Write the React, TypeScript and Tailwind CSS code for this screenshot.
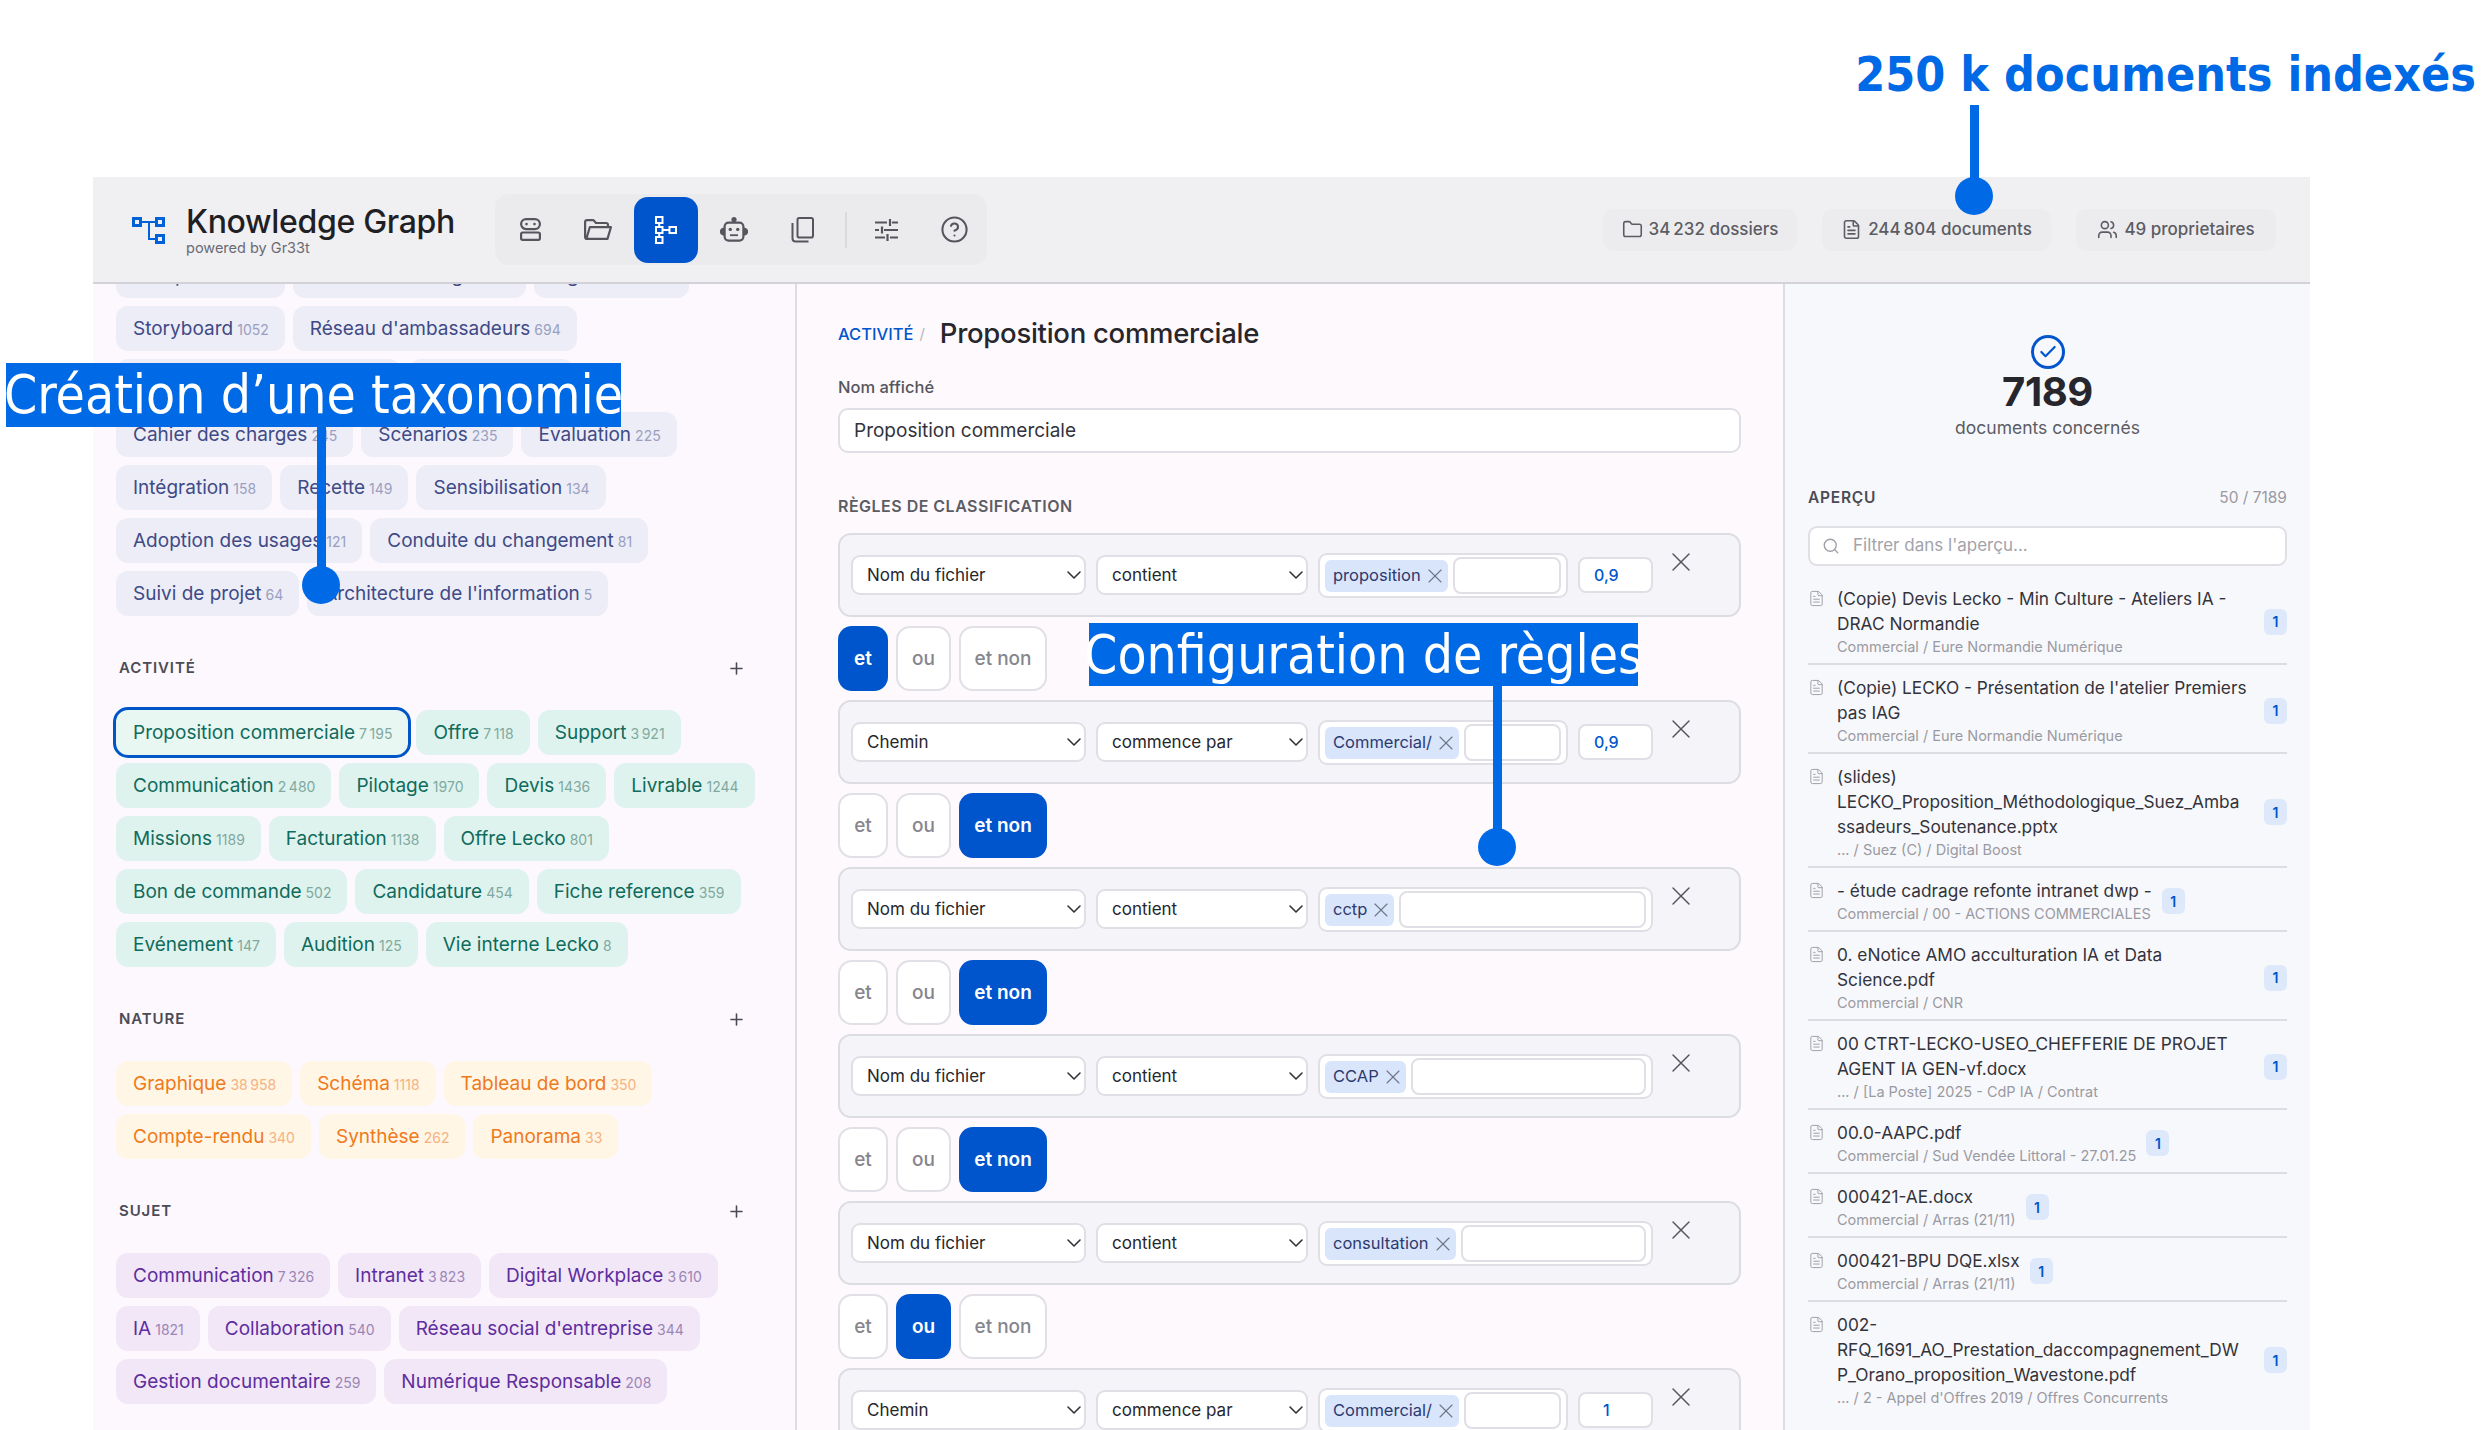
import React from "react";
import { Check, ChevronDown, CircleHelp, FileText, Folder, Plus, Search, Users, X } from "lucide-react";

type Tone = "blue" | "teal" | "orange" | "purple";
type ChipData = [string, string];

const toneClass: Record<Tone, string> = {
  blue: "bg-[#ecedf7] text-[#3f4a86]",
  teal: "bg-[#dff3ee] text-[#0f6b5c]",
  orange: "bg-[#fff6e6] text-[#ef7a1c]",
  purple: "bg-[#f1e7f7] text-[#5f2d9e]",
};

const countClass: Record<Tone, string> = {
  blue: "text-[#9a9fc0]",
  teal: "text-[#7fa9a0]",
  orange: "text-[#f6b27f]",
  purple: "text-[#9c85b5]",
};

function Chip({ label, count, tone, active }: { label: string; count: string; tone: Tone; active?: boolean }) {
  return (
    <div
      className={`h-[45px] shrink-0 rounded-[12px] pl-[17px] pr-[16px] pt-[2px] flex items-center gap-[4px] whitespace-nowrap text-[19px] ${toneClass[tone]} ${
        active ? "outline-[3px] outline-[#0055c8] bg-[#e9f7f3]" : ""
      }`}
    >
      <span>{label}</span>
      <span className={`text-[14px] ${countClass[tone]}`}>{count}</span>
    </div>
  );
}

function ChipRows({ rows, tone }: { rows: ChipData[][]; tone: Tone }) {
  return (
    <div className="flex flex-col gap-[8px]">
      {rows.map((row, i) => (
        <div key={i} className="flex gap-[8px]">
          {row.map(([label, count]) => (
            <Chip key={label} label={label} count={count} tone={tone} active={label === "Proposition commerciale"} />
          ))}
        </div>
      ))}
    </div>
  );
}

function SectionTitle({ title }: { title: string }) {
  return (
    <div className="h-[24px] mt-[40px] mb-[30px] pl-[3px] pr-[49px] flex items-center justify-between">
      <span className="text-[15px] font-semibold tracking-[0.06em] text-[#4b4b55]">{title}</span>
      <Plus size={19} strokeWidth={2} className="text-[#4b4b55]" />
    </div>
  );
}

const taxoRows: ChipData[][] = [
  [["Comparatif", "1892"], ["Atelier de cadrage", "1226"], ["Ingénierie", "1102"]],
  [["Storyboard", "1052"], ["Réseau d'ambassadeurs", "694"]],
  [["Conception fonctionnelle", "312"], ["Benchmark", "288"]],
  [["Cahier des charges", "245"], ["Scénarios", "235"], ["Evaluation", "225"]],
  [["Intégration", "158"], ["Recette", "149"], ["Sensibilisation", "134"]],
  [["Adoption des usages", "121"], ["Conduite du changement", "81"]],
  [["Suivi de projet", "64"], ["Architecture de l'information", "5"]],
];

const activiteRows: ChipData[][] = [
  [["Proposition commerciale", "7\u202f195"], ["Offre", "7\u202f118"], ["Support", "3\u202f921"]],
  [["Communication", "2\u202f480"], ["Pilotage", "1970"], ["Devis", "1436"], ["Livrable", "1244"]],
  [["Missions", "1189"], ["Facturation", "1138"], ["Offre Lecko", "801"]],
  [["Bon de commande", "502"], ["Candidature", "454"], ["Fiche reference", "359"]],
  [["Evénement", "147"], ["Audition", "125"], ["Vie interne Lecko", "8"]],
];

const natureRows: ChipData[][] = [
  [["Graphique", "38\u202f958"], ["Schéma", "1118"], ["Tableau de bord", "350"]],
  [["Compte-rendu", "340"], ["Synthèse", "262"], ["Panorama", "33"]],
];

const sujetRows: ChipData[][] = [
  [["Communication", "7\u202f326"], ["Intranet", "3\u202f823"], ["Digital Workplace", "3\u202f610"]],
  [["IA", "1821"], ["Collaboration", "540"], ["Réseau social d'entreprise", "344"]],
  [["Gestion documentaire", "259"], ["Numérique Responsable", "208"]],
];

function SelectBox({ value, width }: { value: string; width: string }) {
  return (
    <div className={`${width} h-[40px] shrink-0 rounded-[9px] border-2 border-[#dfdfe5] bg-white pl-[14px] flex items-center justify-between text-[17px] text-[#26262c]`}>
      <span className="pt-[2px]">{value}</span>
      <ChevronDown size={24} strokeWidth={1.6} className="-mr-[2px] text-[#33333a]" />
    </div>
  );
}

type Rule = { field: string; op: string; tag: string; score?: string; logic?: "et" | "ou" | "et non" };

const rules: Rule[] = [
  { field: "Nom du fichier", op: "contient", tag: "proposition", score: "0,9", logic: "et" },
  { field: "Chemin", op: "commence par", tag: "Commercial/", score: "0,9", logic: "et non" },
  { field: "Nom du fichier", op: "contient", tag: "cctp", logic: "et non" },
  { field: "Nom du fichier", op: "contient", tag: "CCAP", logic: "et non" },
  { field: "Nom du fichier", op: "contient", tag: "consultation", logic: "ou" },
  { field: "Chemin", op: "commence par", tag: "Commercial/", score: "1" },
];

function RuleCard({ rule }: { rule: Rule }) {
  return (
    <div className="h-[84px] shrink-0 rounded-[13px] border-2 border-[#dcdce3] bg-[#f5f5f9] pl-[11px] pr-[18px] pt-[18px] flex items-start gap-[10px]">
      <div className="pt-[2px] flex gap-[10px]">
        <SelectBox value={rule.field} width="w-[235px]" />
        <SelectBox value={rule.op} width="w-[212px]" />
      </div>
      <div className={`${rule.score ? "w-[250px]" : "w-[335px]"} h-[45px] shrink-0 rounded-[9px] border-2 border-[#dfdfe5] bg-white pl-[5px] pr-[5px] flex items-center gap-[5px]`}>
        <div className="h-[32px] shrink-0 rounded-[6px] bg-[#d9e5fb] pl-[8px] pr-[3px] flex items-center gap-[4px] text-[16.5px] text-[#2d3a6e]">
          <span>{rule.tag}</span>
          <X size={24} strokeWidth={1.1} className="-mx-[2px] text-[#6d7488]" />
        </div>
        <input readOnly className="h-[37px] min-w-0 flex-1 rounded-[8px] border-2 border-[#dfdfe5] bg-white" />
      </div>
      {rule.score && (
        <div className="w-[75px] h-[36px] mt-[4px] shrink-0 rounded-[8px] border-2 border-[#dfdfe5] bg-white pl-[14px] flex items-center text-[16px] font-medium text-[#0055cc]">
          {rule.score === "1" ? <span className="pl-[9px]">1</span> : rule.score}
        </div>
      )}
      <X size={32} strokeWidth={1.1} className="ml-[2px] -mt-[7px] shrink-0 text-[#55555e]" />
    </div>
  );
}

function LogicButtons({ selected }: { selected: string }) {
  const opts = [
    { label: "et", w: "w-[50px]" },
    { label: "ou", w: "w-[55px]" },
    { label: "et non", w: "w-[88px]" },
  ];
  return (
    <div className="flex gap-[8px] my-[9px] h-[65px] shrink-0">
      {opts.map((o) => (
        <div
          key={o.label}
          className={`${o.w} rounded-[14px] pt-[2px] flex items-center justify-center text-[19px] ${
            o.label === selected ? "bg-[#0055cc] text-white font-semibold" : "bg-white border-2 border-[#e0e0e6] text-[#85858e] font-medium"
          }`}
        >
          {o.label}
        </div>
      ))}
    </div>
  );
}

type Doc = { lines: string[]; path: string };

const docs: Doc[] = [
  { lines: ["(Copie) Devis Lecko - Min Culture - Ateliers IA -", "DRAC Normandie"], path: "Commercial / Eure Normandie Numérique" },
  { lines: ["(Copie) LECKO - Présentation de l'atelier Premiers", "pas IAG"], path: "Commercial / Eure Normandie Numérique" },
  { lines: ["(slides)", "LECKO_Proposition_Méthodologique_Suez_Amba", "ssadeurs_Soutenance.pptx"], path: "... / Suez (C) / Digital Boost" },
  { lines: ["- étude cadrage refonte intranet dwp -"], path: "Commercial / 00 - ACTIONS COMMERCIALES" },
  { lines: ["0. eNotice AMO acculturation IA et Data", "Science.pdf"], path: "Commercial / CNR" },
  { lines: ["00 CTRT-LECKO-USEO_CHEFFERIE DE PROJET", "AGENT IA GEN-vf.docx"], path: "... / [La Poste] 2025 - CdP IA / Contrat" },
  { lines: ["00.0-AAPC.pdf"], path: "Commercial / Sud Vendée Littoral - 27.01.25" },
  { lines: ["000421-AE.docx"], path: "Commercial / Arras (21/11)" },
  { lines: ["000421-BPU DQE.xlsx"], path: "Commercial / Arras (21/11)" },
  { lines: ["002-", "RFQ_1691_AO_Prestation_daccompagnement_DW", "P_Orano_proposition_Wavestone.pdf"], path: "... / 2 - Appel d'Offres 2019 / Offres Concurrents" },
];

function DocRow({ doc }: { doc: Doc }) {
  return (
    <div className="pt-[10px] pb-[6px] border-b-2 border-[#dcdde3] last:border-b-0 flex items-center gap-[10px]">
      <div className={`${doc.lines.length > 1 ? "flex-1" : ""} min-w-0 flex gap-[12px] whitespace-nowrap`}>
        <FileText size={17} strokeWidth={1.4} className="mt-[4px] shrink-0 text-[#a0a0a8]" />
        <div>
          {doc.lines.map((l) => (
            <div key={l} className="h-[25px] leading-[25px] text-[17.3px] text-[#33333b]">
              {l}
            </div>
          ))}
          <div className="h-[21px] leading-[21px] text-[14.5px] text-[#9a9aa2]">{doc.path}</div>
        </div>
      </div>
      <div className="w-[23px] h-[26px] shrink-0 rounded-[6px] bg-[#dde8fb] flex items-center justify-center text-[14px] font-semibold text-[#0055cc]">1</div>
    </div>
  );
}

function Stat({ icon, text, width }: { icon: React.ReactNode; text: string; width: string }) {
  return (
    <div className={`${width} h-[42px] rounded-[10px] bg-[#ececef] flex items-center justify-center gap-[6px] text-[17px] font-medium text-[#5c5c64]`}>
      {icon}
      <span>{text}</span>
    </div>
  );
}

function ToolBtn({ children, active }: { children: React.ReactNode; active?: boolean }) {
  return (
    <div className={`w-[64px] h-[66px] rounded-[14px] flex items-center justify-center ${active ? "bg-[#0055cc] text-white" : "text-[#55555e]"}`}>
      {children}
    </div>
  );
}

function Annotation({ className, children }: { className: string; children?: React.ReactNode }) {
  return <div className={`absolute bg-[#0069e6] ${className}`}>{children}</div>;
}

export default function App() {
  return (
    <div className="relative w-[2484px] h-[1430px] overflow-hidden bg-white pt-[177px] pl-[93px] font-['Inter',sans-serif]">
      <div className="w-[2217px] h-[1253px] flex flex-col">
        {/* header */}
        <header className="h-[107px] shrink-0 bg-[#f0f0f3] border-b-2 border-[#d2d2d8] pl-[39px] pr-[34px] flex items-center">
          <svg width="33" height="28" viewBox="0 0 33 28" fill="none" stroke="#0062d6" strokeWidth="3" className="mt-[2px] shrink-0">
            <rect x="1.5" y="1.5" width="7" height="7" />
            <rect x="24.5" y="1.5" width="7" height="7" />
            <rect x="24.5" y="18.5" width="7" height="7" />
            <path d="M8.5 5H24.5M17 5V22H24.5" strokeWidth="2" />
          </svg>
          <div className="ml-[21px] w-[309px]">
            <div className="text-[32px] leading-[36px] font-medium text-[#1f1f24] tracking-[-0.01em] whitespace-nowrap">Knowledge Graph</div>
            <div className="text-[14.5px] leading-[16px] text-[#6a6a72] whitespace-nowrap">powered by Gr33t</div>
          </div>
          <div className="h-[71px] w-[492px] rounded-[14px] bg-[#ebebee] pl-[3px] flex items-center gap-[4px]">
            <ToolBtn>
              <svg width="21" height="23" viewBox="0 0 21 23" fill="none" stroke="currentColor" strokeWidth="2.2">
                <rect x="1.1" y="1.1" width="18.8" height="10" rx="5" />
                <circle cx="6.5" cy="6.1" r="1.3" fill="currentColor" stroke="none" />
                <circle cx="14.5" cy="6.1" r="1.3" fill="currentColor" stroke="none" />
                <rect x="1.1" y="14.5" width="18.8" height="7.4" rx="1.6" />
              </svg>
            </ToolBtn>
            <ToolBtn>
              <svg width="28" height="21" viewBox="0 0 28 21" fill="none" stroke="currentColor" strokeWidth="2.2" strokeLinejoin="round">
                <path d="M5 19.9H3.2C2 19.9 1.1 19 1.1 17.8V3.2C1.1 2 2 1.1 3.2 1.1H9.5L12 4H22C23.1 4 24 4.9 24 6V8" />
                <path d="M5.8 8.2H26.9L23.5 19.9H2.3L5.8 8.2Z" />
              </svg>
            </ToolBtn>
            <ToolBtn active>
              <svg width="22" height="28" viewBox="0 0 22 28" fill="none" stroke="currentColor" strokeWidth="2">
                <rect x="1" y="1" width="6.5" height="6" />
                <rect x="1" y="11" width="6.5" height="6" />
                <rect x="1" y="21" width="6.5" height="6" />
                <rect x="14.5" y="11" width="6.5" height="6" />
                <path d="M4.2 7V11M4.2 17V21M7.5 14H14.5" />
              </svg>
            </ToolBtn>
            <ToolBtn>
              <svg width="28" height="25" viewBox="0 0 28 25" fill="none" stroke="currentColor" strokeWidth="2.2">
                <circle cx="14" cy="2.6" r="2.6" fill="currentColor" stroke="none" />
                <rect x="4.6" y="5.6" width="18.8" height="18" rx="4" />
                <path d="M4 11.5C1.8 12 .9 13.2.9 14.6S1.8 17.2 4 17.7M24 11.5C26.2 12 27.1 13.2 27.1 14.6S26.2 17.2 24 17.7" fill="currentColor" />
                <circle cx="10.3" cy="12.4" r="1.7" fill="currentColor" stroke="none" />
                <circle cx="17.7" cy="12.4" r="1.7" fill="currentColor" stroke="none" />
                <path d="M10 18.2H18" strokeWidth="1.8" />
              </svg>
            </ToolBtn>
            <ToolBtn>
              <svg width="23" height="26" viewBox="0 0 23 26" fill="none" stroke="currentColor" strokeWidth="2">
                <rect x="6.5" y="1" width="15.5" height="19.5" rx="1.8" />
                <path d="M1.5 6V21.5C1.5 23.4 2.6 24.5 4.5 24.5H17.5" />
              </svg>
            </ToolBtn>
            <div className="ml-[7px] mr-[3px] w-[2px] h-[36px] bg-[#d9d9de]" />
            <ToolBtn>
              <svg width="23" height="22" viewBox="0 0 23 22" fill="none" stroke="currentColor" strokeWidth="2.2">
                <path d="M0 3.5H12M17 3.5H23M15 0V7" />
                <path d="M0 11H4M9 11H23M7 7.5V14.5" />
                <path d="M0 18.5H10M15 18.5H23M12.5 15V22" />
              </svg>
            </ToolBtn>
            <ToolBtn>
              <CircleHelp size={29} strokeWidth={1.7} />
            </ToolBtn>
          </div>
          <div className="ml-auto flex gap-[25px]">
            <Stat width="w-[194px]" icon={<Folder size={21} strokeWidth={1.8} />} text={"34\u202f232 dossiers"} />
            <Stat width="w-[229px]" icon={<FileText size={21} strokeWidth={1.8} />} text={"244\u202f804 documents"} />
            <Stat width="w-[200px]" icon={<Users size={21} strokeWidth={1.8} />} text="49 proprietaires" />
          </div>
        </header>

        <div className="flex-1 min-h-0 flex">
          {/* taxonomy column */}
          <aside className="w-[702px] shrink-0 bg-[#fcf8fd] overflow-hidden pl-[23px]">
            <div className="-mt-[31px]">
              <ChipRows rows={taxoRows} tone="blue" />
              <SectionTitle title="ACTIVITÉ" />
              <ChipRows rows={activiteRows} tone="teal" />
              <SectionTitle title="NATURE" />
              <ChipRows rows={natureRows} tone="orange" />
              <SectionTitle title="SUJET" />
              <ChipRows rows={sujetRows} tone="purple" />
            </div>
          </aside>

          {/* rule editor */}
          <main className="w-[988px] shrink-0 bg-[#fdf9fd] border-l-2 border-[#dcdce2] pl-[41px] pr-[42px] pt-[34px] overflow-hidden">
            <div className="h-[32px] flex items-center">
              <span className="text-[16.5px] font-medium text-[#0055cc]">ACTIVITÉ</span>
              <span className="ml-[6px] text-[15px] text-[#b5b5bd]">/</span>
              <span className="ml-[15px] text-[27.5px] font-medium text-[#26262c] tracking-[-0.01em]">Proposition commerciale</span>
            </div>
            <div className="mt-[26px] h-[22px] leading-[22px] text-[16.5px] font-medium text-[#55555e]">Nom affiché</div>
            <div className="mt-[10px] h-[45px] rounded-[10px] border-2 border-[#dfdfe5] bg-white pl-[14px] pt-[2px] flex items-center text-[19px] text-[#33333b]">
              Proposition commerciale
            </div>
            <div className="mt-[42px] mb-[16px] h-[22px] leading-[22px] text-[16px] font-semibold tracking-[0.03em] text-[#5c5c64]">RÈGLES DE CLASSIFICATION</div>
            {rules.map((r, i) => (
              <React.Fragment key={i}>
                <RuleCard rule={r} />
                {r.logic && <LogicButtons selected={r.logic} />}
              </React.Fragment>
            ))}
          </main>

          {/* preview */}
          <section className="flex-1 min-w-0 bg-[#f7f8fb] border-l-2 border-[#dcdce2] pl-[23px] pr-[23px] pt-[51px] overflow-hidden">
            <div className="flex flex-col items-center">
              <div className="w-[34px] h-[34px] rounded-full border-[3px] border-[#0055cc] flex items-center justify-center">
                <Check size={20} strokeWidth={2.6} className="text-[#0055cc]" />
              </div>
              <div className="mt-[1px] h-[44px] leading-[44px] text-[40px] font-bold text-[#26262c] tracking-[-0.01em]">7189</div>
              <div className="mt-[1px] h-[26px] leading-[26px] text-[17.5px] text-[#5c5c64]">documents concernés</div>
            </div>
            <div className="mt-[45px] h-[24px] flex items-center justify-between">
              <span className="text-[15.5px] font-semibold tracking-[0.05em] text-[#4b4b55]">APERÇU</span>
              <span className="text-[15.5px] text-[#9a9aa2]">50 / 7189</span>
            </div>
            <div className="mt-[16px] h-[40px] rounded-[9px] border-2 border-[#dfdfe5] bg-white pl-[12px] flex items-center gap-[13px]">
              <Search size={18} strokeWidth={1.8} className="text-[#a0a0a8]" />
              <input readOnly placeholder="Filtrer dans l'aperçu..." className="flex-1 min-w-0 text-[17px] outline-none placeholder:text-[#a3a3ab]" />
            </div>
            <div className="mt-[10px]">
              {docs.map((d) => (
                <DocRow key={d.lines[0]} doc={d} />
              ))}
            </div>
          </section>
        </div>
      </div>

      {/* video annotations lying over the app */}
      <div className="absolute right-[8px] top-[44px] text-[48px] leading-[60px] font-bold text-[#0069e6] font-['DejaVu_Sans_Condensed',sans-serif] whitespace-nowrap">250 k documents indexés</div>
      <Annotation className="left-[1970px] top-[105px] w-[9px] h-[80px]" />
      <Annotation className="left-[1955px] top-[177px] w-[38px] h-[38px] rounded-full" />

      <Annotation className="left-[6px] top-[363px] w-[615px] h-[64px] flex items-center justify-center text-[53px] text-white font-['DejaVu_Sans_Condensed',sans-serif] whitespace-nowrap">Création d’une taxonomie</Annotation>
      <Annotation className="left-[317px] top-[427px] w-[9px] h-[145px]" />
      <Annotation className="left-[302px] top-[566px] w-[38px] h-[38px] rounded-full" />

      <Annotation className="left-[1089px] top-[623px] w-[549px] h-[63px] flex items-center justify-center text-[53px] text-white font-['DejaVu_Sans_Condensed',sans-serif] whitespace-nowrap">Configuration de règles</Annotation>
      <Annotation className="left-[1493px] top-[686px] w-[9px] h-[145px]" />
      <Annotation className="left-[1478px] top-[828px] w-[38px] h-[38px] rounded-full" />
    </div>
  );
}
